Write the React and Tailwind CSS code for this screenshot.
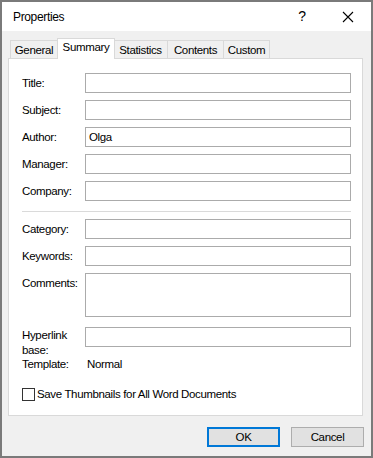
import React from "react";

const font = { fontFamily: '"Segoe UI", "Liberation Sans", Arial, sans-serif' };

const tabs = [
  { name: "General", w: "w-[48px]" },
  { name: "Summary", w: "w-[58px]", active: true },
  { name: "Statistics", w: "w-[54px]" },
  { name: "Contents", w: "w-[56px]" },
  { name: "Custom", w: "w-[46px]" },
];

const Field = ({ label, value, tall }) => (
  <div className="flex items-start">
    <label className={"w-[63px] shrink-0 " + (tall ? "pt-[2px]" : "leading-[20px]")}>{label}</label>
    <div
      className={
        "flex-1 border border-[#ababab] bg-white px-[3px] leading-[18px] " +
        (tall ? "h-[44px]" : "h-[20px]")
      }
    >
      {value}
    </div>
  </div>
);

export default function App() {
  return (
    <div
      className="w-[373px] h-[458px] border-2 border-[#7a7a7a] bg-[#f0f0f0] flex flex-col text-[11.5px] tracking-[-0.35px] text-[#000]"
      style={font}
    >
      {/* title bar */}
      <div className="h-[29px] bg-white flex items-center pl-[11px] shrink-0">
        <span className="flex-1 text-[12px]">Properties</span>
        <span className="w-[46px] text-center text-[14px]">?</span>
        <span className="w-[46px] flex justify-center">
          <svg width="12" height="12" viewBox="0 0 12 12">
            <path d="M1 1 L11 11 M11 1 L1 11" stroke="#000" strokeWidth="1.1" />
          </svg>
        </span>
      </div>

      {/* tabs */}
      <div className="flex items-end pl-[8px] mt-[7px] h-[20px] shrink-0 relative z-10">
        {tabs.map((t, i) =>
          t.active ? (
            <div
              key={t.name}
              className={t.w + " h-[21px] -ml-[1px] -mr-[1px] text-center bg-white border border-b-0 border-[#d9d9d9] leading-[17px] mb-[-1px] relative"}
            >
              {t.name}
            </div>
          ) : (
            <div
              key={t.name}
              className={
                t.w +
                " h-[18px] text-center border border-b-0 border-[#d9d9d9] leading-[18px] " +
                (i > 0 ? "border-l-0" : "")
              }
            >
              {t.name}
            </div>
          )
        )}
      </div>

      {/* panel */}
      <div className="ml-[6px] mr-[8px] h-[358px] bg-white border border-[#d9d9d9] pl-[13px] pr-[11px] pt-[14px] shrink-0">
        <div className="flex flex-col gap-[7px]">
          <Field label="Title:" />
          <Field label="Subject:" />
          <Field label="Author:" value="Olga" />
          <Field label="Manager:" />
          <Field label="Company:" />
        </div>
        <div className="h-px bg-[#dadada] mt-[10px] mb-[7px]" />
        <div className="flex flex-col gap-[7px]">
          <Field label="Category:" />
          <Field label="Keywords:" />
          <Field label="Comments:" tall />
        </div>
        <div className="flex items-start mt-[10px] h-[20px]">
          <label className="w-[63px] shrink-0 leading-[15px] pt-[1px]">
            Hyperlink
            <br />
            base:
          </label>
          <div className="flex-1 h-[20px] border border-[#ababab]" />
        </div>
        <div className="flex mt-[7px] leading-[20px]">
          <span className="w-[65px] shrink-0">Template:</span>
          <span>Normal</span>
        </div>
        <div className="flex items-center mt-[14px] h-[13px]">
          <div className="w-[13px] h-[13px] border border-[#333] bg-white mr-[2px]" />
          <span>Save Thumbnails for All Word Documents</span>
        </div>
      </div>

      {/* buttons */}
      <div className="flex justify-end gap-[11px] pr-[7px] mt-[11px]">
        <button className="w-[73px] h-[20px] border-2 border-[#0078d7] bg-[#e1e1e1] leading-[16px]">OK</button>
        <button className="w-[73px] h-[20px] border border-[#adadad] bg-[#e1e1e1] leading-[18px]">Cancel</button>
      </div>
    </div>
  );
}
